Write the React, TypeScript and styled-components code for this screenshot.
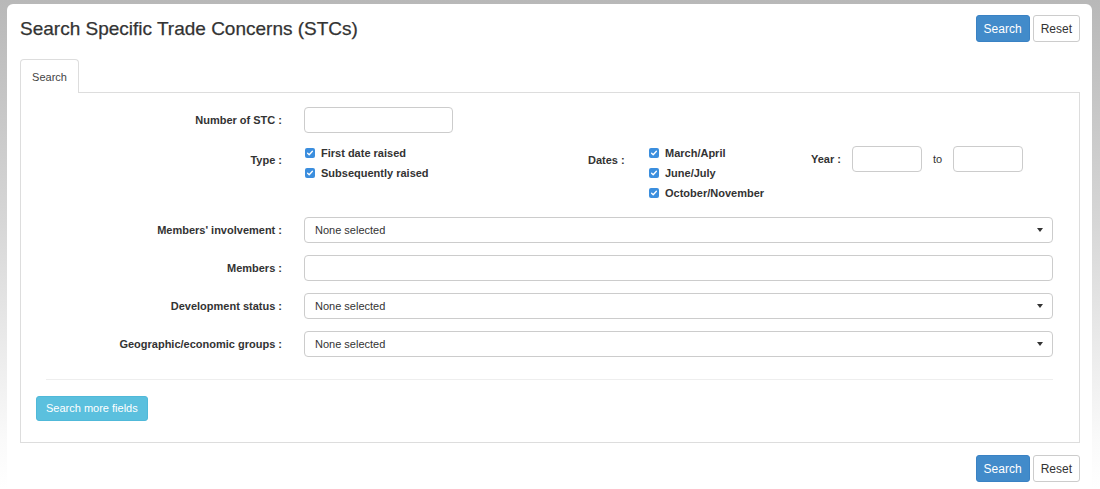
import styled, { createGlobalStyle } from 'styled-components';

const GlobalStyle = createGlobalStyle`
  html, body {
    margin: 0;
    padding: 0;
  }
  body {
    font-family: "Liberation Sans", Arial, sans-serif;
    color: #333;
    background: linear-gradient(to bottom, #b8b8b8 0%, #d6d6d6 45%, #fafafa 90%, #fff 100%);
    min-height: 489px;
  }
  * {
    box-sizing: border-box;
  }
`;

const Page = styled.div`
  padding: 4px 8px 0 7px;
`;

const Card = styled.div`
  background: #fff;
  border-radius: 6px 6px 0 0;
  min-height: 485px;
  padding: 11px 12px 0 13px;
`;

const Header = styled.div`
  display: flex;
  justify-content: space-between;
  align-items: center;
  height: 27px;
`;

const Title = styled.h1`
  margin: 0;
  font-size: 19px;
  font-weight: 400;
  color: #333;
  -webkit-text-stroke: 0.25px #333;
`;

const ButtonGroup = styled.div<{ $bottom?: boolean }>`
  display: flex;
  justify-content: flex-end;
  gap: 3px;
  margin-top: ${(p) => (p.$bottom ? '12px' : '0')};
`;

const Button = styled.button<{ $variant: 'primary' | 'default' | 'info' }>`
  font-family: inherit;
  font-size: ${(p) => (p.$variant === 'info' ? '11px' : '12px')};
  height: ${(p) => (p.$variant === 'info' ? '25px' : '27px')};
  padding: 0 ${(p) => (p.$variant === 'info' ? '9px' : '7px')};
  border-radius: 3px;
  border: 1px solid
    ${(p) =>
      p.$variant === 'primary' ? '#3a82c4' : p.$variant === 'info' ? '#50b9d9' : '#ccc'};
  background: ${(p) =>
    p.$variant === 'primary' ? '#428bca' : p.$variant === 'info' ? '#5bc0de' : '#fff'};
  color: ${(p) => (p.$variant === 'default' ? '#333' : '#fff')};
  cursor: pointer;
  line-height: 1;
`;

const Tabs = styled.div`
  display: flex;
  margin-top: 17px;
`;

const Tab = styled.div`
  width: 59px;
  height: 34px;
  border: 1px solid #ddd;
  border-bottom: none;
  border-radius: 4px 4px 0 0;
  background: #fff;
  font-size: 11px;
  color: #444;
  display: flex;
  align-items: center;
  justify-content: center;
  margin-bottom: -1px;
  position: relative;
  z-index: 1;
`;

const Panel = styled.div`
  border: 1px solid #ddd;
  padding: 14px 26px 21px 15px;
`;

const Form = styled.div`
  display: flex;
  flex-direction: column;
  gap: 12px;
`;

const FieldRow = styled.div`
  display: grid;
  grid-template-columns: 246px 1fr;
  column-gap: 22px;
  align-items: center;
`;

const TypeRow = styled.div`
  display: grid;
  grid-template-columns: 246px 262px 38px 141px auto;
  column-gap: 22px;
  align-items: start;
  padding-bottom: 2px;
`;

const Label = styled.div<{ $align?: 'left' | 'right'; $top?: boolean }>`
  font-size: 11px;
  font-weight: 700;
  color: #333;
  line-height: 15px;
  text-align: ${(p) => p.$align ?? 'right'};
  padding-top: ${(p) => (p.$top ? '8px' : '0')};
`;

const Input = styled.div<{ $width?: number }>`
  width: ${(p) => (p.$width ? `${p.$width}px` : '100%')};
  height: 26px;
  border: 1px solid #ccc;
  border-radius: 4px;
  background: #fff;
`;

const Select = styled.div`
  height: 26px;
  border: 1px solid #ccc;
  border-radius: 4px;
  background: #fff;
  display: flex;
  align-items: center;
  justify-content: space-between;
  padding: 0 9px 0 10px;
  font-size: 11px;
  color: #333;
`;

const Caret = styled.span`
  width: 0;
  height: 0;
  border-left: 3.5px solid transparent;
  border-right: 3.5px solid transparent;
  border-top: 4px solid #333;
`;

const CheckList = styled.div`
  display: flex;
  flex-direction: column;
  margin-top: -2px;
`;

const CheckItem = styled.label`
  display: flex;
  align-items: center;
  gap: 6px;
  height: 20px;
  font-size: 11px;
  font-weight: 700;
  color: #333;
  padding-left: 1px;
`;

const Box = styled.span`
  width: 10px;
  height: 10px;
  border-radius: 2px;
  background: #3b8ede;
  display: inline-flex;
  align-items: center;
  justify-content: center;
`;

const YearGroup = styled.div`
  display: flex;
  align-items: center;
  gap: 11px;
  margin-top: 1px;
`;

const YearLabel = styled.span`
  font-size: 11px;
  font-weight: 700;
  color: #333;
`;

const ToText = styled.span`
  font-size: 11px;
  color: #333;
`;

const Divider = styled.hr`
  border: none;
  border-top: 1px solid #eee;
  margin: 22px 0 16px 10px;
`;

const Check = ({ label }: { label: string }) => (
  <CheckItem>
    <Box>
      <svg width="8" height="8" viewBox="0 0 8 8">
        <path d="M1.6 4.2 L3.2 5.8 L6.4 2.2" fill="none" stroke="#fff" strokeWidth="1.3" strokeLinecap="round" strokeLinejoin="round" />
      </svg>
    </Box>
    {label}
  </CheckItem>
);

const App = () => {
  return (
    <Page>
      <GlobalStyle />
      <Card>
        <Header>
          <Title>Search Specific Trade Concerns (STCs)</Title>
          <ButtonGroup>
            <Button $variant="primary">Search</Button>
            <Button $variant="default">Reset</Button>
          </ButtonGroup>
        </Header>

        <Tabs>
          <Tab>Search</Tab>
        </Tabs>
        <Panel>
          <Form>
            <FieldRow>
              <Label>Number of STC :</Label>
              <Input $width={149} />
            </FieldRow>

            <TypeRow>
              <Label $top>Type :</Label>
              <CheckList>
                <Check label="First date raised" />
                <Check label="Subsequently raised" />
              </CheckList>
              <Label $top $align="left">Dates :</Label>
              <CheckList>
                <Check label="March/April" />
                <Check label="June/July" />
                <Check label="October/November" />
              </CheckList>
              <YearGroup>
                <YearLabel>Year :</YearLabel>
                <Input $width={70} />
                <ToText>to</ToText>
                <Input $width={70} />
              </YearGroup>
            </TypeRow>

            <FieldRow>
              <Label>Members' involvement :</Label>
              <Select>
                None selected
                <Caret />
              </Select>
            </FieldRow>

            <FieldRow>
              <Label>Members :</Label>
              <Input />
            </FieldRow>

            <FieldRow>
              <Label>Development status :</Label>
              <Select>
                None selected
                <Caret />
              </Select>
            </FieldRow>

            <FieldRow>
              <Label>Geographic/economic groups :</Label>
              <Select>
                None selected
                <Caret />
              </Select>
            </FieldRow>
          </Form>

          <Divider />
          <Button $variant="info">Search more fields</Button>
        </Panel>

        <ButtonGroup $bottom>
          <Button $variant="primary">Search</Button>
          <Button $variant="default">Reset</Button>
        </ButtonGroup>
      </Card>
    </Page>
  );
};

export default App;
